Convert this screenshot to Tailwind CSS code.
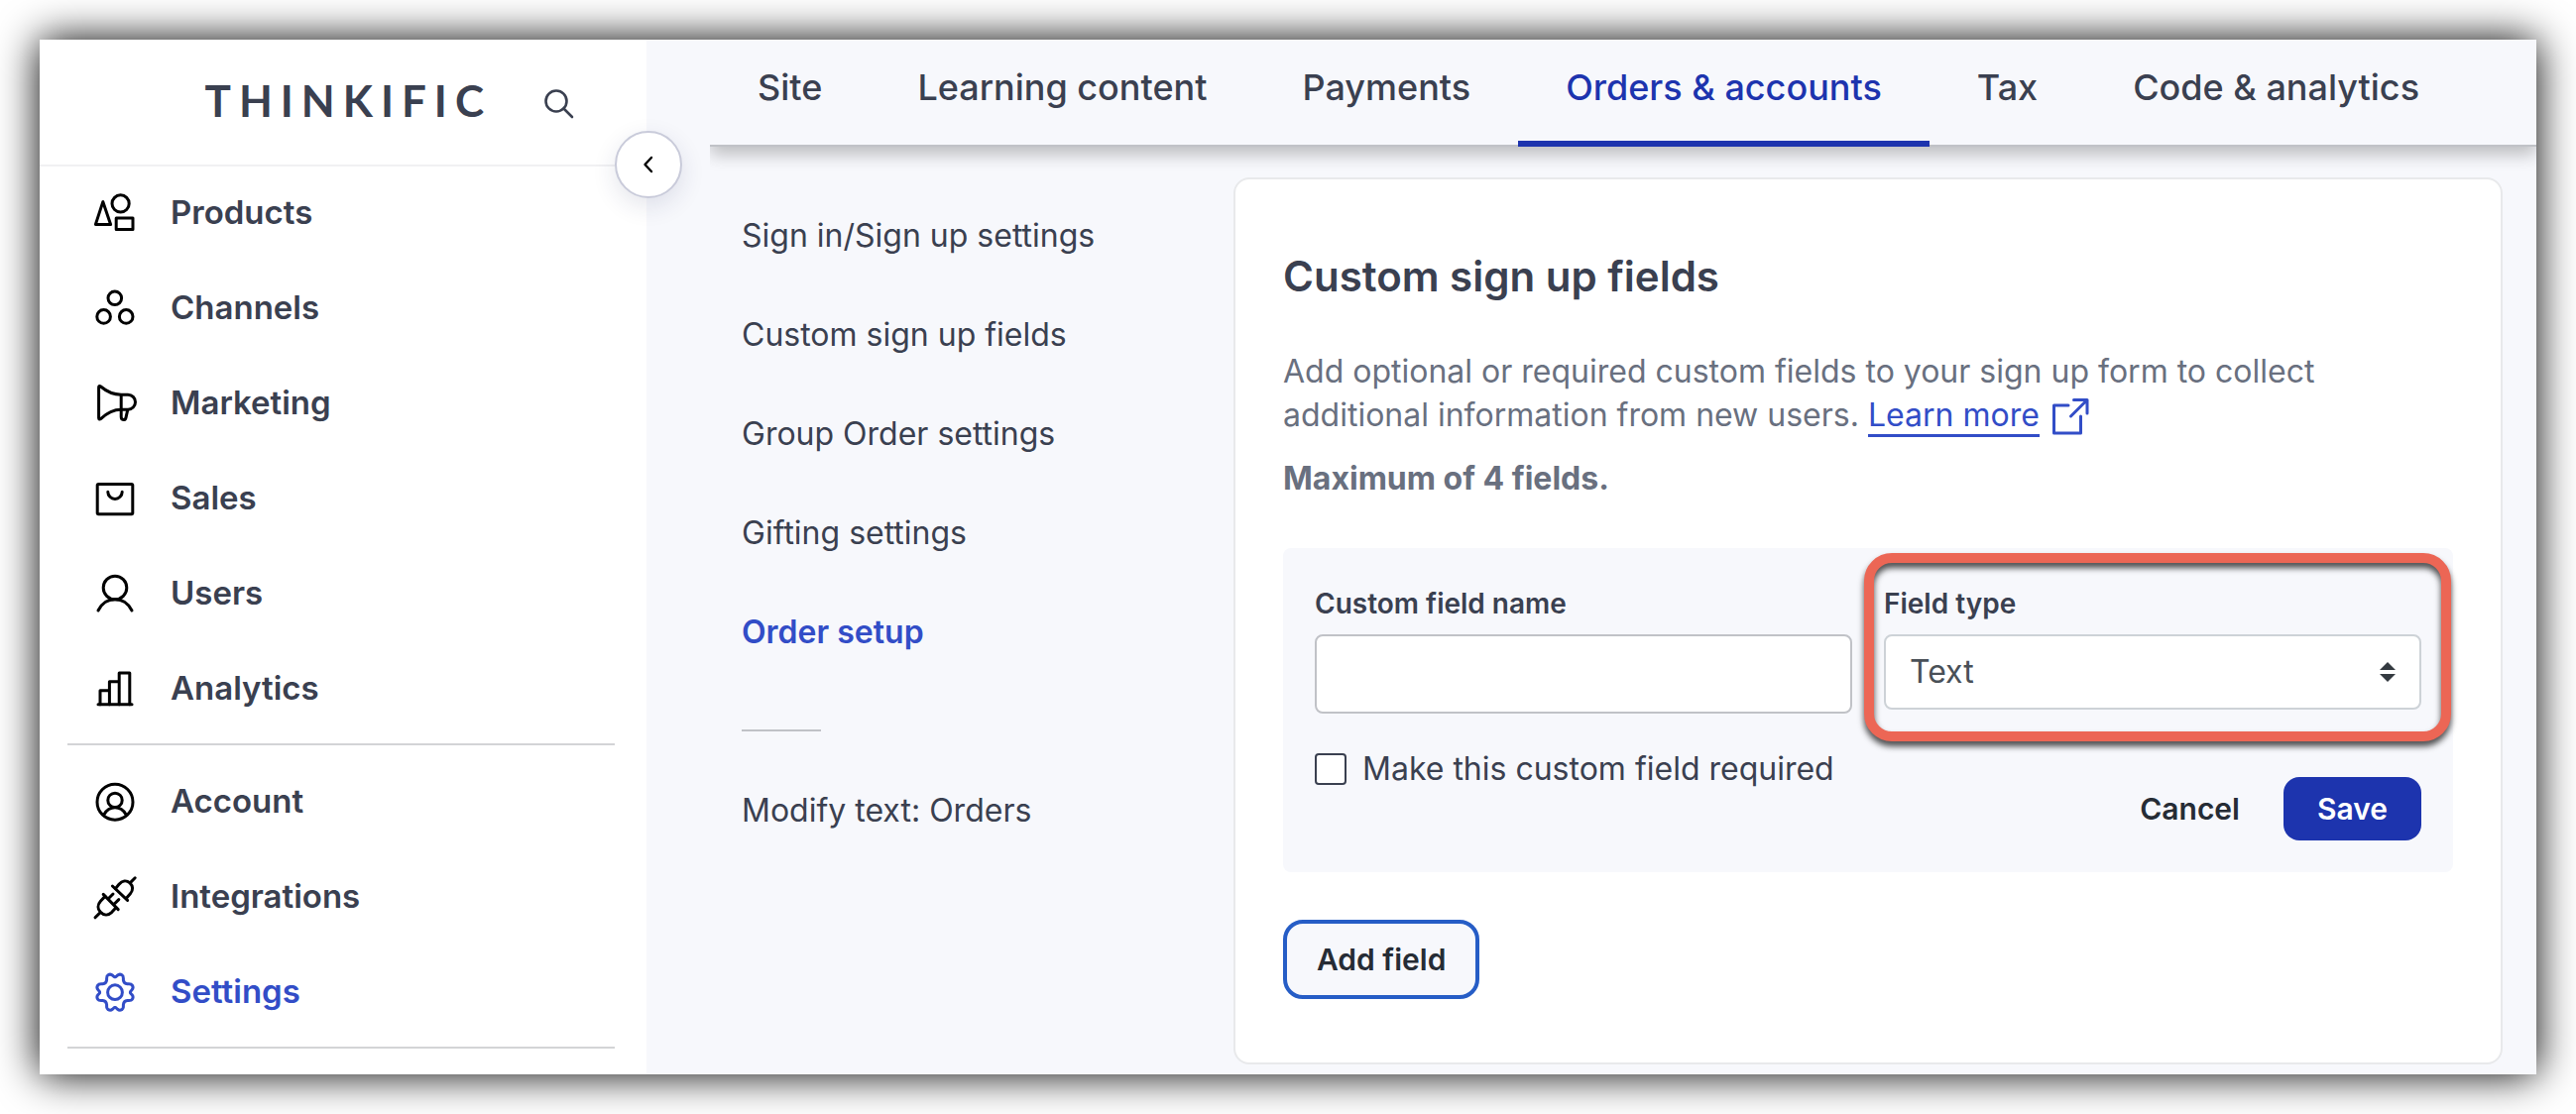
<!DOCTYPE html>
<html lang="en">

<head>
    <meta charset="UTF-8">
    <meta name="viewport" content="width=device-width, initial-scale=1.0">
    <title>Custom sign up fields - Thinkific</title>
    <script src="https://cdn.jsdelivr.net/npm/@tailwindcss/browser@4"></script>
</head>

<body class="bg-white p-10 min-h-screen flex font-['Inter',sans-serif] text-[32px] leading-10 text-[#3a4050]">
    <div class="flex flex-1 min-w-0 overflow-clip bg-[#f7f8fc] shadow-[0_0_40px_#000]">

        <!-- Sidebar -->
        <aside class="relative w-[612px] shrink-0 bg-white">
            <div class="flex items-center justify-end h-32 pr-[72px] border-b-2 border-[#f1f1f3]">
                <a href="#" class="font-['Lato',sans-serif] font-bold text-[44px] tracking-[8px] mr-13 mb-1">THINKIFIC</a>
                <button type="button" aria-label="Search" class="mt-1">
                    <svg class="w-8 h-8" viewBox="0 0 32 32" fill="none" stroke="currentColor" stroke-width="2.6" stroke-linecap="round">
                        <circle cx="13" cy="13" r="10.5" />
                        <path d="M20.5 20.5 29 29" />
                    </svg>
                </button>
            </div>
            <button type="button" aria-label="Collapse menu"
                class="absolute z-10 top-[92px] -right-9 w-[68px] h-[68px] flex items-center justify-center rounded-full border-2 border-[#c9cbda] bg-white text-black shadow-[0_8px_24px_rgba(30,40,90,0.12)]">
                <svg class="w-6 h-6" viewBox="0 0 24 24" fill="none" stroke="currentColor" stroke-width="2.4" stroke-linecap="round" stroke-linejoin="round">
                    <path d="M15 5 8.5 12 15 19" />
                </svg>
            </button>

            <nav class="pt-[22px] pl-7 pr-8 font-semibold text-[33px]">
                <ul class="flex flex-col gap-12 px-6">
                    <li>
                        <a href="#" class="flex items-center gap-8">
                            <svg class="w-12 h-12 text-black" viewBox="0 0 24 24" fill="none" stroke="currentColor" stroke-width="1.5" stroke-linejoin="round">
                                <path d="M5.9 6.8 2.2 18.2h7.6z" />
                                <circle cx="14.8" cy="7.7" r="4.3" />
                                <path d="M12.6 15h8.4v5.8h-8.4z" />
                            </svg>
                            Products
                        </a>
                    </li>
                    <li>
                        <a href="#" class="flex items-center gap-8">
                            <svg class="w-12 h-12 text-black" viewBox="0 0 24 24" fill="none" stroke="currentColor" stroke-width="1.5">
                                <circle cx="11.9" cy="7.4" r="3.4" />
                                <circle cx="6.3" cy="16.7" r="3.4" />
                                <circle cx="17.6" cy="16.7" r="3.4" />
                            </svg>
                            Channels
                        </a>
                    </li>
                    <li>
                        <a href="#" class="flex items-center gap-8">
                            <svg class="w-12 h-12 text-black" viewBox="0 0 24 24" fill="none" stroke="currentColor" stroke-width="1.5" stroke-linejoin="round">
                                <path d="M3.8 4.4c0-.8.5-.8 1-.4C7.4 6.2 11 8.1 15.1 8.1h3.4a3.75 3.75 0 0 1 0 7.500h-3.4C11 15.6 7.4 17.8 4.8 20.3c-.5.4-1 .3-1-.4z" />
                                <path d="M15.1 8.1v11.2c0 1.9 2.1 1.9 2.4.4l.9-4" />
                            </svg>
                            Marketing
                        </a>
                    </li>
                    <li>
                        <a href="#" class="flex items-center gap-8">
                            <svg class="w-12 h-12 text-black" viewBox="0 0 24 24" fill="none" stroke="currentColor" stroke-width="1.5" stroke-linecap="round">
                                <rect x="3.1" y="5.2" width="17.8" height="15.2" rx=".6" />
                                <path d="M8.4 9.1a3.6 3.6 0 0 0 7.2 0" />
                            </svg>
                            Sales
                        </a>
                    </li>
                    <li>
                        <a href="#" class="flex items-center gap-8">
                            <svg class="w-12 h-12 text-black" viewBox="0 0 24 24" fill="none" stroke="currentColor" stroke-width="1.5" stroke-linecap="round">
                                <circle cx="12" cy="9.5" r="5.9" />
                                <path d="M3.5 21C5.2 17.6 8.3 15.4 12 15.4s6.8 2.2 8.5 5.6" />
                            </svg>
                            Users
                        </a>
                    </li>
                    <li>
                        <a href="#" class="flex items-center gap-8">
                            <svg class="w-12 h-12 text-black" viewBox="0 0 24 24" fill="none" stroke="currentColor" stroke-width="1.5" stroke-linecap="round" stroke-linejoin="round">
                                <path d="M3.5 20.4h17" />
                                <path d="M4.5 20.4v-7h4.7v7M9.2 20.4V8.9h4.9v11.5M14.1 20.4V4.5h5.3v15.9" />
                            </svg>
                            Analytics
                        </a>
                    </li>
                </ul>
                <hr class="my-8 border-t-2 border-[#d3d4d6]">
                <ul class="flex flex-col gap-12 px-6">
                    <li>
                        <a href="#" class="flex items-center gap-8">
                            <svg class="w-12 h-12 text-black" viewBox="0 0 24 24" fill="none" stroke="currentColor" stroke-width="1.5" stroke-linecap="round">
                                <circle cx="12" cy="12.6" r="9" />
                                <circle cx="12" cy="11.7" r="3.6" />
                                <path d="M6.5 18.9c1.2-2.2 3.2-3.5 5.5-3.5s4.3 1.3 5.5 3.5" />
                            </svg>
                            Account
                        </a>
                    </li>
                    <li>
                        <a href="#" class="flex items-center gap-8">
                            <svg class="w-12 h-12 text-black" viewBox="0 0 24 24" fill="none" stroke="currentColor" stroke-width="1.5" stroke-linecap="round" stroke-linejoin="round">
                                <path d="M22.1 2.9 19.7 5.3M10.7 7l7.6 7.2" />
                                <path d="M12.2 8.3 14 6.1c1.6-1.9 3.8-2.1 5.5-.7 1.7 1.5 1.7 3.8.2 5.5l-2.1 2.4" />
                                <path d="M6.1 11.2l7.5 7.6M8.5 13.5l2.5-2.5M11.3 16.4l2.6-2.6" />
                                <path d="M7 12.2 4.7 14.6c-1.6 1.8-1.6 4 0 5.6s3.9 1.7 5.6.1l2.2-2.4M4.6 20.3 2 22.9" />
                            </svg>
                            Integrations
                        </a>
                    </li>
                    <li>
                        <a href="#" aria-current="page" class="flex items-center gap-8 text-[#324dc7]">
                            <svg class="w-12 h-12" viewBox="-12 -12.6 24 24" fill="none" stroke="currentColor" stroke-width="1.5" stroke-linecap="round" stroke-linejoin="round">
                                <path id="tooth" d="M0-7.7Q.5-7.7 1.2-8.5 2.3-9.5 3.5-8.7 4.2-8.3 4.2-7V-6.2Q4.4-4.4 6.2-4.2H7Q8.3-4.2 8.7-3.5 9.5-2.3 8.5-1.2 7.7-.5 7.7 0" />
                                <use href="#tooth" transform="rotate(90)" />
                                <use href="#tooth" transform="rotate(180)" />
                                <use href="#tooth" transform="rotate(270)" />
                                <circle r="3.7" />
                            </svg>
                            Settings
                        </a>
                    </li>
                </ul>
                <hr class="mt-8 border-t-2 border-[#d3d4d6]">
            </nav>
        </aside>

        <main class="flex-1 min-w-0">
            <!-- Tabs, the shadow only falls below the bar -->
            <nav class="flex ml-16 border-b-2 border-[#c0c2c7] text-[36px] font-medium whitespace-nowrap shadow-[0_8px_16px_rgba(0,0,0,0.24)] [clip-path:inset(0_0_-32px_0)]">
                <a href="#" class="px-12 pt-7 pb-10 -mb-0.5">Site</a>
                <a href="#" class="px-12 pt-7 pb-10 -mb-0.5">Learning content</a>
                <a href="#" class="px-12 pt-7 pb-10 -mb-0.5">Payments</a>
                <a href="#" aria-current="page" class="px-12 pt-7 pb-[34px] -mb-0.5 border-b-6 border-[#1d34ae] text-[#1d34ae]">Orders &amp; accounts</a>
                <a href="#" class="px-12 pt-7 pb-10 -mb-0.5">Tax</a>
                <a href="#" class="px-12 pt-7 pb-10 -mb-0.5">Code &amp; analytics</a>
            </nav>

            <div class="flex pt-[31px] pr-[34px] pb-2.5 pl-24">
                <nav class="w-[496px] shrink-0 flex flex-col items-start gap-[60px] pt-[39px]">
                    <a href="#">Sign in/Sign up settings</a>
                    <a href="#">Custom sign up fields</a>
                    <a href="#">Group Order settings</a>
                    <a href="#">Gifting settings</a>
                    <a href="#" aria-current="page" class="font-semibold text-[#324dc7]">Order setup</a>
                    <hr class="w-20 mt-[18px] border-t-2 border-[#c0c2c7]">
                    <a href="#">Modify text: Orders</a>
                </nav>

                <section class="flex-1 min-w-0 px-12 pt-[70px] pb-16 rounded-2xl border-2 border-[#e8e9eb] bg-white">
                    <h1 class="text-[42px] leading-[56px] font-semibold">Custom sign up fields</h1>
                    <p class="mt-[46px] leading-11 text-[#69707f]">
                        Add optional or required custom fields to your sign up form to collect<br>
                        additional information from new users.
                        <a href="#" class="text-[#324dc7]"><span class="border-b-3">Learn more</span>
                            <svg class="inline w-10 h-10 align-[-10px] ml-0.5" viewBox="0 0 40 40" fill="none" stroke="currentColor" stroke-width="3" stroke-linejoin="round" stroke-linecap="round">
                                <path d="M18 9H3.5v28h27V20" />
                                <path d="M23.5 3.5H37V17M37 3.5 20.5 20" />
                            </svg></a>
                    </p>
                    <p class="mt-5 leading-11 font-bold text-[#69707f]">Maximum of 4 fields.</p>

                    <!-- New field form -->
                    <form class="grid grid-cols-2 gap-8 mt-12 p-8 rounded-lg bg-[#f7f8fc]">
                        <div>
                            <label for="field-name" class="block pt-0.5 mb-[9px] text-[28px] leading-11 font-semibold">Custom field name</label>
                            <input id="field-name" type="text" class="block w-full h-20 px-6 rounded-lg border-2 border-[#c0c2c7] bg-white">
                            <div class="flex items-center gap-4 mt-9">
                                <input id="required" type="checkbox" class="appearance-none w-8 h-8 shrink-0 rounded-sm border-2 border-[#3a4050] bg-white checked:bg-[#1d34ae]">
                                <label for="required">Make this custom field required</label>
                            </div>
                        </div>
                        <div>
                            <div class="relative">
                                <label for="field-type" class="block pt-0.5 mb-[9px] text-[28px] leading-11 font-semibold">Field type</label>
                                <select id="field-type" class="appearance-none block w-full h-[76px] px-6 rounded-lg border-2 border-[#cdd2d7] bg-white text-[#495057]">
                                    <option>Text</option>
                                    <option>Checkbox</option>
                                </select>
                                <svg class="absolute right-[26px] bottom-7 w-4 h-5 pointer-events-none" viewBox="0 0 16 20" fill="#343a40">
                                    <path d="M8 0l8 8H0zM0 12h16l-8 8z" />
                                </svg>
                                <div class="absolute -top-[27px] -bottom-8 -left-5 -right-[30px] rounded-[28px] border-10 border-[#ec6655] drop-shadow-[0_5px_3px_rgba(0,0,0,0.7)] pointer-events-none"></div>
                            </div>
                            <div class="flex justify-end items-center gap-11 mt-[68px] text-[30px] font-semibold">
                                <button type="button" class="text-[#262c35]">Cancel</button>
                                <button type="submit" class="h-16 px-[34px] rounded-2xl bg-[#1d34ae] text-white">Save</button>
                            </div>
                        </div>
                    </form>

                    <button type="button" class="block h-20 mt-12 px-[30px] rounded-[20px] border-4 border-[#265dc6] bg-[#f7f8fc] text-[30px] font-semibold text-[#262c35]">Add field</button>
                </section>
            </div>
        </main>
    </div>
</body>

</html>
